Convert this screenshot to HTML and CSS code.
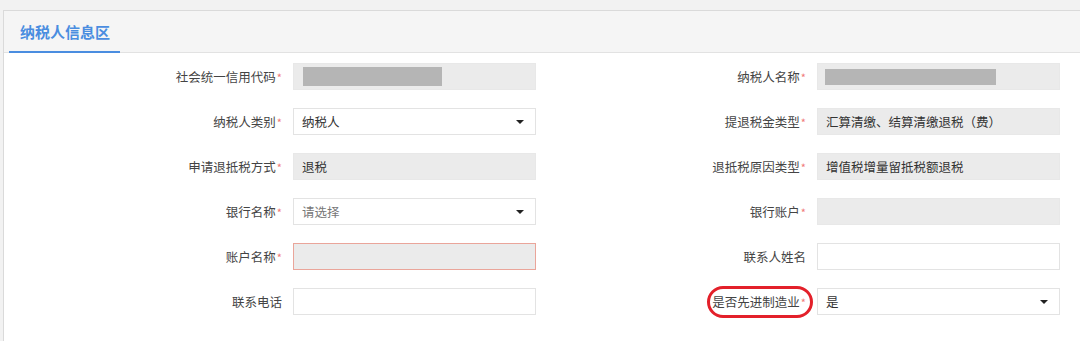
FILE: index.html
```html
<!DOCTYPE html>
<html lang="zh-CN">
<head>
    <meta charset="UTF-8">
    <title>纳税人信息区</title>
    <link rel="stylesheet" href="styles.css">
</head>
<body>
    <div class="panel">
        <div class="panel-head">
            <div class="tab">纳税人信息区</div>
        </div>
        <div class="form">
            <div class="field">
                <label class="req">社会统一信用代码</label>
                <div class="input readonly"><span class="mask mask-left"></span></div>
            </div>
            <div class="field">
                <label class="req">纳税人名称</label>
                <div class="input readonly"><span class="mask mask-right"></span></div>
            </div>

            <div class="field">
                <label class="req">纳税人类别</label>
                <div class="input select">纳税人<i class="caret"></i></div>
            </div>
            <div class="field">
                <label class="req">提退税金类型</label>
                <div class="input readonly">汇算清缴、结算清缴退税（费）</div>
            </div>

            <div class="field">
                <label class="req">申请退抵税方式</label>
                <div class="input readonly">退税</div>
            </div>
            <div class="field">
                <label class="req">退抵税原因类型</label>
                <div class="input readonly">增值税增量留抵税额退税</div>
            </div>

            <div class="field">
                <label class="req">银行名称</label>
                <div class="input select placeholder">请选择<i class="caret"></i></div>
            </div>
            <div class="field">
                <label class="req">银行账户</label>
                <div class="input readonly"></div>
            </div>

            <div class="field">
                <label class="req">账户名称</label>
                <div class="input readonly error"></div>
            </div>
            <div class="field">
                <label>联系人姓名</label>
                <div class="input"></div>
            </div>

            <div class="field">
                <label>联系电话</label>
                <div class="input"></div>
            </div>
            <div class="field">
                <label class="req">是否先进制造业</label>
                <div class="input select">是<i class="caret"></i></div>
                <!-- hand drawn mark on the screenshot -->
                <span class="mark"></span>
            </div>
        </div>
    </div>
</body>
</html>
```

FILE: styles.css
```css
body {
    margin: 0;
    padding: 10px 0 0 3px;
    background-color: #f2f2f2;
    font-family: "Noto Sans CJK SC", "Noto Sans", sans-serif;
    font-size: 12.5px;
    color: #333;
    overflow: hidden;
}

.panel {
    background-color: #fff;
    border: 1px solid #dadada;
    border-right: none;
    height: 340px;
}

.panel-head {
    display: flex;
    height: 41px;
    padding-left: 5px;
    background-color: #f5f5f5;
    border-bottom: 1px solid #e2e2e2;
}

.tab {
    display: flex;
    align-items: center;
    padding: 0 10px 0 11px;
    margin-bottom: -1px;
    font-size: 15px;
    font-weight: bold;
    color: #4a8de0;
    border-bottom: 2px solid #4a8de0;
}

.form {
    display: grid;
    grid-template-columns: 524px 524px;
    row-gap: 18px;
    padding: 10px 0 0 8px;
}

.field {
    display: flex;
    align-items: center;
    position: relative;
}

.field label {
    width: 270px;
    text-align: right;
    color: #444;
    white-space: nowrap;
}

.field label.req::after {
    content: "*";
    color: #f07a7a;
    font-size: 11px;
    margin-left: 1px;
}

.input {
    display: flex;
    align-items: center;
    box-sizing: border-box;
    width: 243px;
    height: 27px;
    margin-left: 11px;
    padding: 0 8px;
    background-color: #fff;
    border: 1px solid #e3e3e3;
    color: #333;
    white-space: nowrap;
}

.readonly {
    background-color: #ebebeb;
    border-color: #e8e8e8;
}

.input.error {
    border-color: #eaa59a;
}

.placeholder {
    color: #777;
}

.select {
    justify-content: space-between;
}

.caret {
    width: 0;
    height: 0;
    margin-right: 3px;
    border-left: 4px solid transparent;
    border-right: 4px solid transparent;
    border-top: 4px solid #222;
}

.mask {
    display: block;
    height: 19px;
    background-color: #b5b5b5;
}

.mask-left {
    width: 139px;
    margin-left: 1px;
}

.mask-right {
    width: 171px;
    height: 16px;
    margin-left: -1px;
}

.mark {
    position: absolute;
    left: 171px;
    top: -2px;
    width: 100px;
    height: 26px;
    border: 3px solid #e3202a;
    border-radius: 16px;
}
```
